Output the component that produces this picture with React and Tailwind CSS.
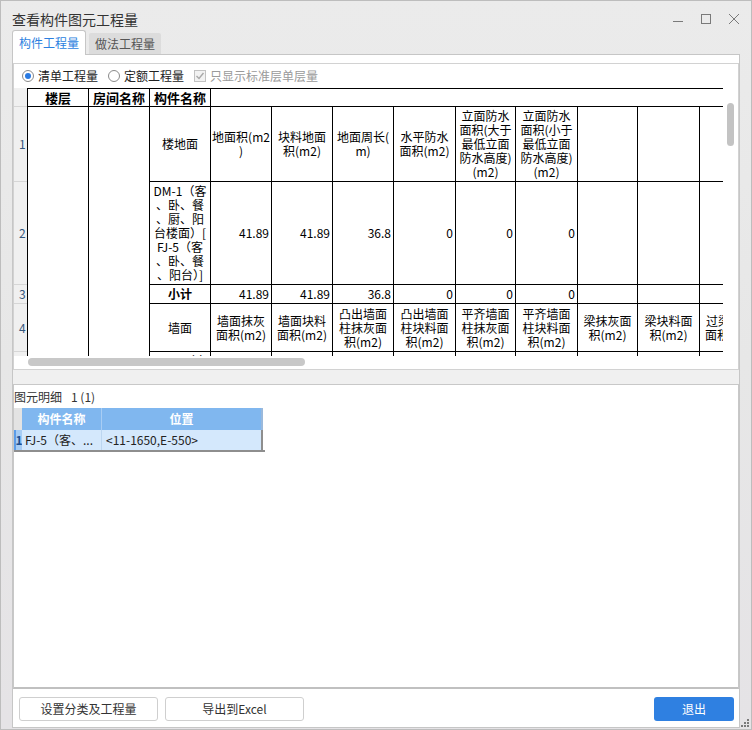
import React from 'react';

const CELL = 'border-r border-b border-black flex items-center justify-center text-center overflow-hidden';

function C({ children, cls = '' }) {
  return <div className={`${CELL} ${cls}`}>{children}</div>;
}

function T({ lines, bold }) {
  return (
    <C>
      <div className={bold ? 'whitespace-nowrap font-bold' : 'whitespace-nowrap'}>
        {lines.map((l, i) => (
          <div key={i}>{l}</div>
        ))}
      </div>
    </C>
  );
}

function N({ v }) {
  return <div className="border-r border-b border-black flex items-center justify-end pr-[2px]">{v}</div>;
}

function E() {
  return <div className="border-r border-b border-black" />;
}

function RowHead({ h, n }) {
  return (
    <div className={`${h} border-b border-[#d6d6d6] flex items-center pl-[5px] text-[#35577d] text-[12px]`}>{n}</div>
  );
}

export default function App() {
  const row1 = [
    ['地面积(m2', ')'],
    ['块料地面', '积(m2)'],
    ['地面周长(', 'm)'],
    ['水平防水', '面积(m2)'],
    ['立面防水', '面积(大于', '最低立面', '防水高度)', '(m2)'],
    ['立面防水', '面积(小于', '最低立面', '防水高度)', '(m2)'],
  ];
  const row4 = [
    ['墙面抹灰', '面积(m2)'],
    ['墙面块料', '面积(m2)'],
    ['凸出墙面', '柱抹灰面', '积(m2)'],
    ['凸出墙面', '柱块料面', '积(m2)'],
    ['平齐墙面', '柱抹灰面', '积(m2)'],
    ['平齐墙面', '柱块料面', '积(m2)'],
    ['梁抹灰面', '积(m2)'],
    ['梁块料面', '积(m2)'],
    ['过梁抹灰', '面积(m2)'],
  ];
  const vals = ['41.89', '41.89', '36.8', '0', '0', '0'];

  return (
    <div className="relative w-[752px] h-[730px] border border-[#bdbdbd] bg-gradient-to-b from-[#ebebeb] via-[#e7e7e7] to-[#e5e3e6] flex flex-col overflow-hidden font-['Noto_Sans_CJK_SC',sans-serif] text-[12px] text-[#222]">
      {/* title bar */}
      <div className="h-[29px] flex items-start justify-between pl-[11px] pr-[10px]">
        <div className="pt-[10px] text-[14px] leading-[16px] text-[#333]">查看构件图元工程量</div>
        <svg width="70" height="29" viewBox="0 0 70 29" className="shrink-0">
          <line x1="2" y1="20.5" x2="12" y2="20.5" stroke="#7a7a7a" strokeWidth="1" />
          <rect x="30.5" y="13.5" width="9" height="9" fill="none" stroke="#7a7a7a" strokeWidth="1" />
          <line x1="58" y1="13" x2="68" y2="23" stroke="#7a7a7a" strokeWidth="1" />
          <line x1="68" y1="13" x2="58" y2="23" stroke="#7a7a7a" strokeWidth="1" />
        </svg>
      </div>

      {/* tabs */}
      <div className="h-[24px] flex items-end pl-[11px]">
        <div className="relative z-10 -mb-px h-[25px] w-[74px] bg-white border border-b-0 border-[#c6c6c6] rounded-t-[3px] flex items-center justify-center text-[12px] text-[#2c7fe0]">
          构件工程量
        </div>
        <div className="ml-[3px] h-[21px] w-[72px] bg-[#dcdcdc] rounded-t-[2px] flex items-center justify-center text-[12px] text-[#555]">
          做法工程量
        </div>
      </div>

      {/* panel */}
      <div className="mx-[11px] h-[674px] mb-[1px] border border-[#c6c6c6] bg-white flex flex-col">
        <div className="h-[8px]" />

        {/* top sub-panel */}
        <div className="h-[307px] border border-[#d2d2d2] flex flex-col">
          {/* radios */}
          <div className="h-[24px] flex items-center pl-[8px] text-[12px]">
            <div className="w-[12px] h-[12px] rounded-full border border-[#8a8a8a] flex items-center justify-center bg-white">
              <div className="w-[6px] h-[6px] rounded-full bg-[#2a7ae2]" />
            </div>
            <span className="ml-[4px] text-[#222]">清单工程量</span>
            <div className="ml-[10px] w-[12px] h-[12px] rounded-full border border-[#8a8a8a] bg-white" />
            <span className="ml-[4px] text-[#222]">定额工程量</span>
            <div className="ml-[10px] w-[12px] h-[12px] border border-[#c2c2c2] bg-[#f2f2f2] flex items-center justify-center">
              <svg width="10" height="10" viewBox="0 0 10 10">
                <path d="M1.5 5 L4 7.5 L8.5 2" fill="none" stroke="#a8a8a8" strokeWidth="1.4" />
              </svg>
            </div>
            <span className="ml-[4px] text-[#9a9a9a]">只显示标准层单层量</span>
          </div>

          {/* table region */}
          <div className="h-[268px] flex">
            {/* row header */}
            <div className="w-[13px] bg-[#f0f0f0] flex flex-col overflow-hidden">
              <RowHead h="h-[19px] shrink-0" n="" />
              <RowHead h="h-[75px] shrink-0" n="1" />
              <RowHead h="h-[103px] shrink-0" n="2" />
              <RowHead h="h-[19px] shrink-0" n="3" />
              <RowHead h="h-[48px] shrink-0" n="4" />
              <RowHead h="h-[20px] shrink-0" n="" />
            </div>

            {/* grid */}
            <div className="w-[696px] h-[268px] overflow-hidden">
              <div className="w-max border-t border-l border-black grid grid-cols-[61px_61px_61px_61px_61px_61px_62px_60px_62px_60px_62px_61px] grid-rows-[18px_75px_103px_19px_48px_20px] text-[12px] leading-[14px] text-black">
                <C cls="font-bold text-[13px]">楼层</C>
                <C cls="font-bold text-[13px]">房间名称</C>
                <C cls="font-bold text-[13px]">构件名称</C>
                <div className="col-span-9 border-b border-black" />

                <div className="row-span-5 border-r border-black" />
                <div className="row-span-5 border-r border-black" />

                {/* row 1 */}
                <T lines={['楼地面']} />
                {row1.map((l, i) => (
                  <T key={i} lines={l} />
                ))}
                <E />
                <E />
                <E />

                {/* row 2 */}
                <T lines={['DM-1（客', '、卧、餐', '、厨、阳', '台楼面）[', 'FJ-5（客', '、卧、餐', '、阳台）]']} />
                {vals.map((v, i) => (
                  <N key={i} v={v} />
                ))}
                <E />
                <E />
                <E />

                {/* row 3 */}
                <T lines={['小计']} bold />
                {vals.map((v, i) => (
                  <N key={i} v={v} />
                ))}
                <E />
                <E />
                <E />

                {/* row 4 */}
                <T lines={['墙面']} />
                {row4.map((l, i) => (
                  <T key={i} lines={l} />
                ))}

                {/* row 5 (partially visible) */}
                <div className="border-r border-black flex justify-center pt-[2px] whitespace-nowrap overflow-hidden">
                  QM-1（内
                </div>
                <div className="border-r border-black" />
                <div className="border-r border-black" />
                <div className="border-r border-black" />
                <div className="border-r border-black" />
                <div className="border-r border-black" />
                <div className="border-r border-black" />
                <div className="border-r border-black" />
                <div className="border-r border-black" />
                <div className="border-r border-black" />
              </div>
            </div>

            {/* vertical scrollbar */}
            <div className="w-[15px] pt-[15px] pl-[4px]">
              <div className="w-[7px] h-[43px] rounded-full bg-[#c3c3c3]" />
            </div>
          </div>

          {/* horizontal scrollbar */}
          <div className="h-[13px] pt-[2px] pl-[14px]">
            <div className="w-[277px] h-[8px] rounded-full bg-[#c8c8c8]" />
          </div>
        </div>

        {/* splitter */}
        <div className="h-[14px] bg-[#f0f0f0]" />

        {/* lower sub-panel */}
        <div className="h-[305px] border border-[#c8c8c8] border-b-2 border-b-[#c0c0c0]">
          <div className="h-[23px] flex items-center pl-[0px] text-[12px] text-[#333]">
            <span>图元明细</span>
            <span className="ml-[9px]">1 (1)</span>
          </div>
          <div className="w-[251px] flex flex-col text-[12px]">
            <div className="flex h-[22px]">
              <div className="w-[8px] bg-[#e3e3e3]" />
              <div className="w-[80px] bg-[#80b7ef] text-white font-bold flex items-center justify-center border-r border-[#a8cdf4]">
                构件名称
              </div>
              <div className="w-[161px] bg-[#80b7ef] text-white font-bold flex items-center justify-center border-r-2 border-[#9ab9dc]">
                位置
              </div>
            </div>
            <div className="flex h-[22px] border-b-2 border-[#8e8e8e]">
              <div className="w-[8px] bg-[#a6ccf4] border-l-2 border-[#5b9ce8] flex items-center justify-center font-bold text-[#1c4f8f]">
                1
              </div>
              <div className="w-[80px] bg-[#d4e8fc] flex items-center pl-[3px] border-r border-[#bcd6f0] whitespace-nowrap overflow-hidden">
                FJ-5（客、...
              </div>
              <div className="w-[161px] bg-[#d4e8fc] flex items-center pl-[4px] border-r-2 border-[#8e8e8e]">
                &lt;11-1650,E-550&gt;
              </div>
            </div>
          </div>
        </div>

        {/* buttons */}
        <div className="h-[38px] flex items-start pt-[8px] pl-[6px] pr-[5px]">
          <button className="w-[139px] h-[24px] border border-[#cfcfcf] rounded-[3px] bg-white text-[12px] text-[#333] flex items-center justify-center">
            设置分类及工程量
          </button>
          <button className="ml-[7px] w-[139px] h-[24px] border border-[#cfcfcf] rounded-[3px] bg-white text-[12px] text-[#333] flex items-center justify-center">
            导出到Excel
          </button>
          <button className="ml-auto w-[80px] h-[24px] rounded-[3px] bg-[#2f80e1] text-white text-[12px] flex items-center justify-center">
            退出
          </button>
        </div>
      </div>

      {/* resize grip */}
      <svg width="9" height="9" viewBox="0 0 9 9" className="absolute right-[1px] bottom-[1px]">
        <rect x="6" y="0" width="2" height="2" fill="#7a7a7a" />
        <rect x="3" y="3" width="2" height="2" fill="#7a7a7a" />
        <rect x="6" y="3" width="2" height="2" fill="#7a7a7a" />
        <rect x="0" y="6" width="2" height="2" fill="#7a7a7a" />
        <rect x="3" y="6" width="2" height="2" fill="#7a7a7a" />
        <rect x="6" y="6" width="2" height="2" fill="#7a7a7a" />
      </svg>
    </div>
  );
}
